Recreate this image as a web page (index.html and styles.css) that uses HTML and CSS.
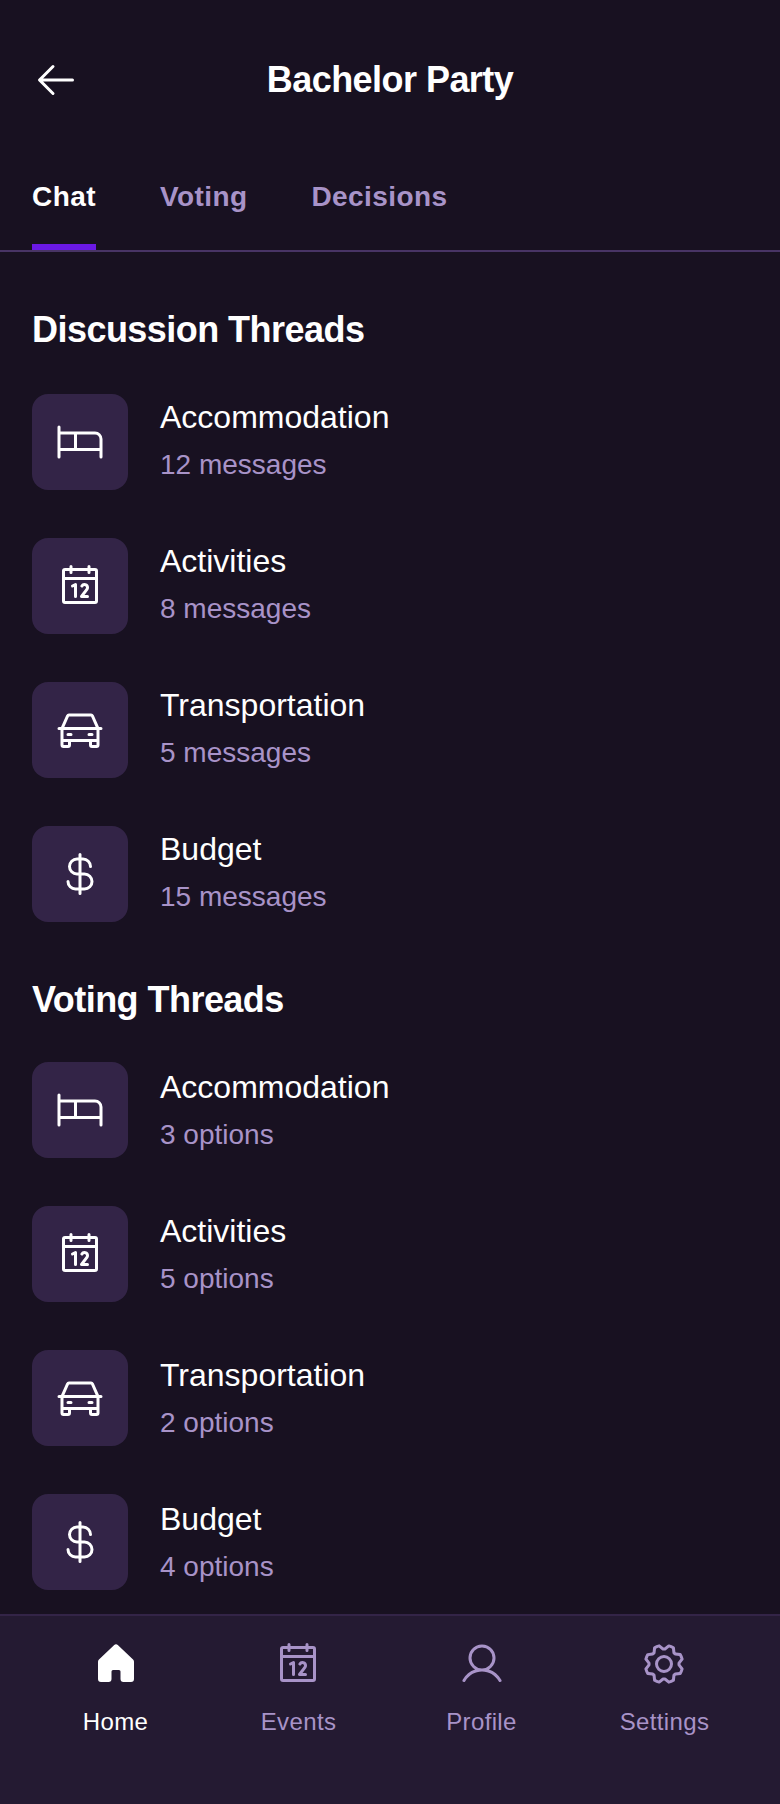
FILE: index.html
```html
<!DOCTYPE html>
<html lang="en">
<head>
<meta charset="utf-8">
<title>Bachelor Party</title>
<link rel="stylesheet" href="styles.css">
</head>
<body>
<svg class="sprite" aria-hidden="true">
  <symbol id="bed" viewBox="0 0 256 256"><path d="M208,72H24V48a8,8,0,0,0-16,0V208a8,8,0,0,0,16,0V176H232v32a8,8,0,0,0,16,0V112A40,40,0,0,0,208,72ZM24,88H96v72H24Zm88,72V88h96a24,24,0,0,1,24,24v48Z"/></symbol>
  <symbol id="calendar" viewBox="0 0 256 256"><path d="M208,32H184V24a8,8,0,0,0-16,0v8H88V24a8,8,0,0,0-16,0v8H48A16,16,0,0,0,32,48V208a16,16,0,0,0,16,16H208a16,16,0,0,0,16-16V48A16,16,0,0,0,208,32ZM72,48v8a8,8,0,0,0,16,0V48h80v8a8,8,0,0,0,16,0V48h24V80H48V48ZM208,208H48V96H208V208Zm-96-88v64a8,8,0,0,1-16,0V132.94l-4.42,2.22a8,8,0,0,1-7.16-14.32l16-8A8,8,0,0,1,112,120Zm59.16,30.45L152,176h16a8,8,0,0,1,0,16H136a8,8,0,0,1-6.4-12.8l28.78-38.37A8,8,0,1,0,145.07,132a8,8,0,1,1-13.85-8A24,24,0,0,1,176,136,23.76,23.76,0,0,1,171.16,150.45Z"/></symbol>
  <symbol id="car" viewBox="0 0 256 256"><path d="M240,112H229.2L201.42,49.5A16,16,0,0,0,186.8,40H69.2a16,16,0,0,0-14.62,9.5L26.8,112H16a8,8,0,0,0,0,16h8v80a16,16,0,0,0,16,16H64a16,16,0,0,0,16-16V192h96v16a16,16,0,0,0,16,16h24a16,16,0,0,0,16-16V128h8a8,8,0,0,0,0-16ZM69.2,56H186.8l24.89,56H44.31ZM64,208H40V192H64Zm128,0V192h24v16Zm24-32H40V128H216ZM56,152a8,8,0,0,1,8-8H80a8,8,0,0,1,0,16H64A8,8,0,0,1,56,152Zm112,0a8,8,0,0,1,8-8h16a8,8,0,0,1,0,16H176A8,8,0,0,1,168,152Z"/></symbol>
  <symbol id="dollar" viewBox="0 0 256 256"><path d="M152,120H136V56h8a32,32,0,0,1,32,32,8,8,0,0,0,16,0,48.05,48.05,0,0,0-48-48h-8V24a8,8,0,0,0-16,0V40h-8a48,48,0,0,0,0,96h8v64H104a32,32,0,0,1-32-32,8,8,0,0,0-16,0,48.05,48.05,0,0,0,48,48h16v16a8,8,0,0,0,16,0V216h16a48,48,0,0,0,0-96Zm-40,0a32,32,0,0,1,0-64h8v64Zm40,80H136V136h16a32,32,0,0,1,0,64Z"/></symbol>
</svg>

<header class="header">
  <svg class="icon" viewBox="0 0 256 256"><path d="M224,128a8,8,0,0,1-8,8H59.31l58.35,58.34a8,8,0,0,1-11.32,11.32l-72-72a8,8,0,0,1,0-11.32l72-72a8,8,0,0,1,11.32,11.32L59.31,120H216A8,8,0,0,1,224,128Z"/></svg>
  <h1 class="header-title">Bachelor Party</h1>
</header>

<nav class="tabs">
  <a class="tab tab-active">Chat</a>
  <a class="tab">Voting</a>
  <a class="tab">Decisions</a>
</nav>

<main class="content">
  <section class="section">
    <h2 class="section-title">Discussion Threads</h2>
    <div class="thread"><div class="tile"><svg class="icon"><use href="#bed"/></svg></div><div class="info"><p class="name">Accommodation</p><p class="meta">12 messages</p></div></div>
    <div class="thread"><div class="tile"><svg class="icon"><use href="#calendar"/></svg></div><div class="info"><p class="name">Activities</p><p class="meta">8 messages</p></div></div>
    <div class="thread"><div class="tile"><svg class="icon"><use href="#car"/></svg></div><div class="info"><p class="name">Transportation</p><p class="meta">5 messages</p></div></div>
    <div class="thread"><div class="tile"><svg class="icon"><use href="#dollar"/></svg></div><div class="info"><p class="name">Budget</p><p class="meta">15 messages</p></div></div>
  </section>
  <section class="section section-voting">
    <h2 class="section-title">Voting Threads</h2>
    <div class="thread"><div class="tile"><svg class="icon"><use href="#bed"/></svg></div><div class="info"><p class="name">Accommodation</p><p class="meta">3 options</p></div></div>
    <div class="thread"><div class="tile"><svg class="icon"><use href="#calendar"/></svg></div><div class="info"><p class="name">Activities</p><p class="meta">5 options</p></div></div>
    <div class="thread"><div class="tile"><svg class="icon"><use href="#car"/></svg></div><div class="info"><p class="name">Transportation</p><p class="meta">2 options</p></div></div>
    <div class="thread"><div class="tile"><svg class="icon"><use href="#dollar"/></svg></div><div class="info"><p class="name">Budget</p><p class="meta">4 options</p></div></div>
  </section>
</main>

<nav class="bottom-nav">
  <a class="nav-item nav-active">
    <span class="nav-icon"><svg class="icon" viewBox="0 0 256 256"><path d="M224,115.55V208a16,16,0,0,1-16,16H168a16,16,0,0,1-16-16V168a8,8,0,0,0-8-8H112a8,8,0,0,0-8,8v40a16,16,0,0,1-16,16H48a16,16,0,0,1-16-16V115.55a16,16,0,0,1,5.17-11.78l80-75.48.11-.11a16,16,0,0,1,21.53,0,1.14,1.14,0,0,0,.11.11l80,75.48A16,16,0,0,1,224,115.55Z"/></svg></span>
    <span class="nav-label">Home</span>
  </a>
  <a class="nav-item">
    <span class="nav-icon"><svg class="icon"><use href="#calendar"/></svg></span>
    <span class="nav-label">Events</span>
  </a>
  <a class="nav-item">
    <span class="nav-icon"><svg class="icon" viewBox="0 0 256 256"><path d="M230.92,212c-15.23-26.33-38.7-45.21-66.09-54.16a72,72,0,1,0-73.66,0C63.78,166.78,40.31,185.66,25.08,212a8,8,0,1,0,13.85,8c18.84-32.56,52.14-52,89.07-52s70.23,19.44,89.07,52a8,8,0,1,0,13.85-8ZM72,96a56,56,0,1,1,56,56A56.06,56.06,0,0,1,72,96Z"/></svg></span>
    <span class="nav-label">Profile</span>
  </a>
  <a class="nav-item">
    <span class="nav-icon"><svg class="icon" viewBox="0 0 256 256"><path d="M128,80a48,48,0,1,0,48,48A48.05,48.05,0,0,0,128,80Zm0,80a32,32,0,1,1,32-32A32,32,0,0,1,128,160Zm88-29.84q.06-2.16,0-4.32l14.92-18.64a8,8,0,0,0,1.48-7.06,107.21,107.21,0,0,0-10.88-26.25,8,8,0,0,0-6-3.93l-23.72-2.64q-1.48-1.56-3-3L186,40.54a8,8,0,0,0-3.94-6,107.71,107.71,0,0,0-26.25-10.87,8,8,0,0,0-7.06,1.49L130.16,40Q128,40,125.84,40L107.2,25.11a8,8,0,0,0-7.06-1.48A107.6,107.6,0,0,0,73.89,34.51a8,8,0,0,0-3.93,6L67.32,64.27q-1.56,1.49-3,3L40.54,70a8,8,0,0,0-6,3.94,107.71,107.71,0,0,0-10.87,26.25,8,8,0,0,0,1.49,7.06L40,125.84Q40,128,40,130.16L25.11,148.8a8,8,0,0,0-1.48,7.06,107.21,107.21,0,0,0,10.88,26.25,8,8,0,0,0,6,3.93l23.72,2.64q1.49,1.56,3,3L70,215.46a8,8,0,0,0,3.94,6,107.71,107.71,0,0,0,26.25,10.87,8,8,0,0,0,7.06-1.49L125.84,216q2.16.06,4.32,0l18.64,14.92a8,8,0,0,0,7.06,1.48,107.21,107.21,0,0,0,26.25-10.88,8,8,0,0,0,3.93-6l2.64-23.72q1.56-1.48,3-3L215.46,186a8,8,0,0,0,6-3.94,107.71,107.71,0,0,0,10.87-26.25,8,8,0,0,0-1.49-7.06Zm-16.1-6.5a73.93,73.93,0,0,1,0,8.68,8,8,0,0,0,1.74,5.48l14.19,17.73a91.57,91.57,0,0,1-6.23,15L187,173.11a8,8,0,0,0-5.1,2.64,74.11,74.11,0,0,1-6.14,6.14,8,8,0,0,0-2.64,5.1l-2.51,22.58a91.32,91.32,0,0,1-15,6.23l-17.74-14.19a8,8,0,0,0-5-1.75h-.48a73.93,73.93,0,0,1-8.68,0,8,8,0,0,0-5.48,1.74L100.45,215.8a91.57,91.57,0,0,1-15-6.23L82.89,187a8,8,0,0,0-2.64-5.1,74.11,74.11,0,0,1-6.14-6.14,8,8,0,0,0-5.1-2.64L46.43,170.6a91.32,91.32,0,0,1-6.23-15l14.19-17.74a8,8,0,0,0,1.74-5.48,73.93,73.93,0,0,1,0-8.68,8,8,0,0,0-1.74-5.48L40.2,100.45a91.57,91.57,0,0,1,6.23-15L69,82.89a8,8,0,0,0,5.1-2.64,74.11,74.11,0,0,1,6.14-6.14A8,8,0,0,0,82.89,69L85.4,46.43a91.32,91.32,0,0,1,15-6.23l17.74,14.19a8,8,0,0,0,5.48,1.74,73.93,73.93,0,0,1,8.68,0,8,8,0,0,0,5.48-1.74L155.55,40.2a91.57,91.57,0,0,1,15,6.23L173.11,69a8,8,0,0,0,2.64,5.1,74.11,74.11,0,0,1,6.14,6.14,8,8,0,0,0,5.1,2.64l22.58,2.51a91.32,91.32,0,0,1,6.23,15l-14.19,17.74A8,8,0,0,0,199.87,123.66Z"/></svg></span>
    <span class="nav-label">Settings</span>
  </a>
</nav>
</body>
</html>
```

FILE: styles.css
```css
* {
  box-sizing: border-box;
}

body {
  margin: 0;
  min-height: 1804px;
  display: flex;
  flex-direction: column;
  background: #181121;
  color: #ffffff;
  font-family: "Liberation Sans", Arial, sans-serif;
}

h1,
h2,
p {
  margin: 0;
}

.sprite {
  display: none;
}

.icon {
  display: block;
  width: 48px;
  height: 48px;
  flex: none;
  fill: currentColor;
}

.header {
  display: flex;
  align-items: center;
  height: 144px;
  padding: 32px 32px 16px;
}

.header-title {
  flex: 1;
  padding: 0 48px 1px 0;
  text-align: center;
  font-size: 36px;
  line-height: 45px;
  letter-spacing: -0.54px;
}

.tabs {
  display: flex;
  gap: 64px;
  height: 108px;
  padding: 0 32px;
  border-bottom: 2px solid #483465;
}

.tab {
  padding: 32px 0 26px;
  border-bottom: 6px solid transparent;
  color: #a893c8;
  font-size: 28px;
  font-weight: 700;
  line-height: 42px;
  letter-spacing: 0.42px;
}

.tab-active {
  color: #ffffff;
  border-bottom-color: #6a19e5;
}

.content {
  flex: 1;
  padding-top: 24px;
}

.section-title {
  height: 94px;
  padding: 31px 32px 0;
  font-size: 36px;
  line-height: 45px;
  letter-spacing: -0.54px;
}

.thread {
  display: flex;
  align-items: center;
  gap: 32px;
  height: 144px;
  padding: 0 32px;
}

.tile {
  display: flex;
  align-items: center;
  justify-content: center;
  width: 96px;
  height: 96px;
  border-radius: 16px;
  background: #332447;
}

.info {
  padding-bottom: 5px;
}

.name {
  margin-bottom: 3px;
  font-size: 32px;
  line-height: 48px;
}

.meta {
  color: #a893c8;
  font-size: 28px;
  line-height: 42px;
}

.section-voting .section-title {
  height: 92px;
}

.section-voting .info {
  padding-bottom: 1px;
}

.bottom-nav {
  display: flex;
  gap: 16px;
  height: 190px;
  padding: 16px 32px 0;
  border-top: 2px solid #332447;
  background: #241a32;
}

.nav-item {
  flex: 1;
  display: flex;
  flex-direction: column;
  align-items: center;
  gap: 8px;
  color: #a893c8;
}

.nav-active {
  color: #ffffff;
}

.nav-icon {
  display: flex;
  align-items: center;
  height: 64px;
}

.nav-item:nth-child(even) .nav-icon {
  padding-right: 1px;
}

.nav-label {
  font-size: 24px;
  line-height: 36px;
  letter-spacing: 0.36px;
}
```
